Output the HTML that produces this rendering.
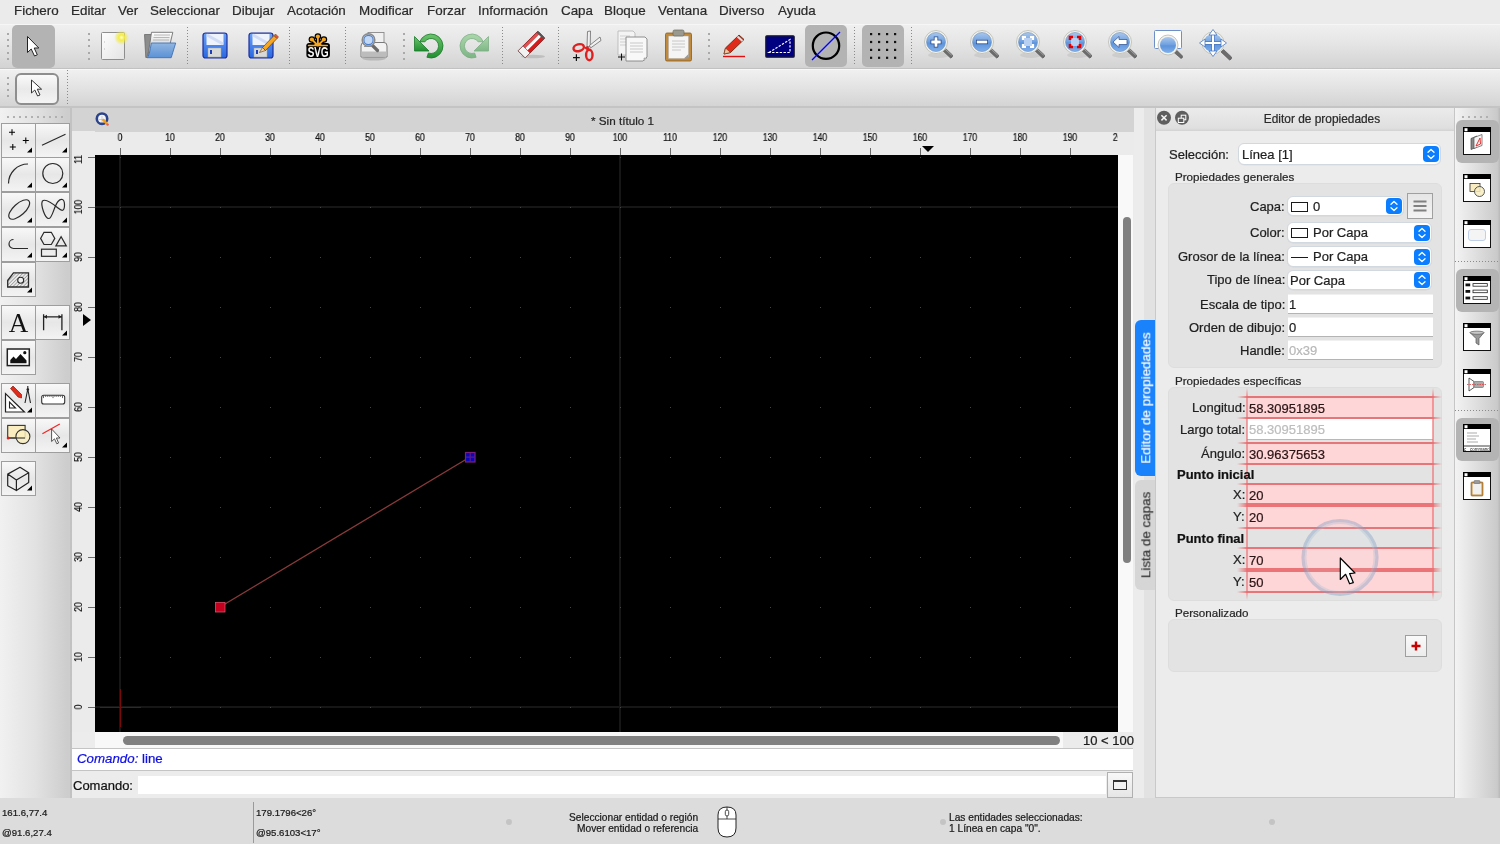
<!DOCTYPE html>
<html><head><meta charset="utf-8"><style>
*{box-sizing:border-box;margin:0;padding:0}
html,body{width:1500px;height:844px;overflow:hidden;background:#ececec;font-family:"Liberation Sans",sans-serif;color:#1e1e1e}
.a{position:absolute}
.t{position:absolute;white-space:nowrap;line-height:1;will-change:transform;-webkit-text-stroke:0.22px currentColor}
svg{position:absolute;overflow:visible;will-change:transform}
</style></head><body>

<div class="a" style="left:0;top:0;width:1500px;height:24px;background:#ebebeb"></div>
<div class="t" style="left:14px;top:4px;font-size:13.4px;color:#2b2b2b">Fichero</div>
<div class="t" style="left:71px;top:4px;font-size:13.4px;color:#2b2b2b">Editar</div>
<div class="t" style="left:118px;top:4px;font-size:13.4px;color:#2b2b2b">Ver</div>
<div class="t" style="left:150px;top:4px;font-size:13.4px;color:#2b2b2b">Seleccionar</div>
<div class="t" style="left:232px;top:4px;font-size:13.4px;color:#2b2b2b">Dibujar</div>
<div class="t" style="left:287px;top:4px;font-size:13.4px;color:#2b2b2b">Acotación</div>
<div class="t" style="left:359px;top:4px;font-size:13.4px;color:#2b2b2b">Modificar</div>
<div class="t" style="left:427px;top:4px;font-size:13.4px;color:#2b2b2b">Forzar</div>
<div class="t" style="left:478px;top:4px;font-size:13.4px;color:#2b2b2b">Información</div>
<div class="t" style="left:561px;top:4px;font-size:13.4px;color:#2b2b2b">Capa</div>
<div class="t" style="left:604px;top:4px;font-size:13.4px;color:#2b2b2b">Bloque</div>
<div class="t" style="left:658px;top:4px;font-size:13.4px;color:#2b2b2b">Ventana</div>
<div class="t" style="left:719px;top:4px;font-size:13.4px;color:#2b2b2b">Diverso</div>
<div class="t" style="left:778px;top:4px;font-size:13.4px;color:#2b2b2b">Ayuda</div>
<div class="a" style="left:0;top:24px;width:1500px;height:45px;background:linear-gradient(#efefef,#e6e6e6 40%,#d3d3d3);border-top:1px solid #f6f6f6;border-bottom:1.5px solid #c2c2c2"></div>
<div class="a" style="left:0;top:69px;width:1500px;height:39px;background:linear-gradient(#f0f0f0,#e4e4e4 45%,#d4d4d4);border-top:1px solid #f8f8f8;border-bottom:2px solid #c4c4c4"></div>
<div class="a" style="left:7px;top:33.0px;width:2px;height:2px;background:#a9a9a9"></div><div class="a" style="left:7px;top:39.2px;width:2px;height:2px;background:#a9a9a9"></div><div class="a" style="left:7px;top:45.4px;width:2px;height:2px;background:#a9a9a9"></div><div class="a" style="left:7px;top:51.6px;width:2px;height:2px;background:#a9a9a9"></div><div class="a" style="left:7px;top:57.8px;width:2px;height:2px;background:#a9a9a9"></div>
<div class="a" style="left:88px;top:33.0px;width:2px;height:2px;background:#a9a9a9"></div><div class="a" style="left:88px;top:39.2px;width:2px;height:2px;background:#a9a9a9"></div><div class="a" style="left:88px;top:45.4px;width:2px;height:2px;background:#a9a9a9"></div><div class="a" style="left:88px;top:51.6px;width:2px;height:2px;background:#a9a9a9"></div><div class="a" style="left:88px;top:57.8px;width:2px;height:2px;background:#a9a9a9"></div>
<div class="a" style="left:403px;top:33.0px;width:2px;height:2px;background:#a9a9a9"></div><div class="a" style="left:403px;top:39.2px;width:2px;height:2px;background:#a9a9a9"></div><div class="a" style="left:403px;top:45.4px;width:2px;height:2px;background:#a9a9a9"></div><div class="a" style="left:403px;top:51.6px;width:2px;height:2px;background:#a9a9a9"></div><div class="a" style="left:403px;top:57.8px;width:2px;height:2px;background:#a9a9a9"></div>
<div class="a" style="left:708px;top:33.0px;width:2px;height:2px;background:#a9a9a9"></div><div class="a" style="left:708px;top:39.2px;width:2px;height:2px;background:#a9a9a9"></div><div class="a" style="left:708px;top:45.4px;width:2px;height:2px;background:#a9a9a9"></div><div class="a" style="left:708px;top:51.6px;width:2px;height:2px;background:#a9a9a9"></div><div class="a" style="left:708px;top:57.8px;width:2px;height:2px;background:#a9a9a9"></div>
<div class="a" style="left:187px;top:27px;width:1px;height:39px;background:repeating-linear-gradient(#8a8a8a 0 1px,transparent 1px 3px)"></div>
<div class="a" style="left:289px;top:27px;width:1px;height:39px;background:repeating-linear-gradient(#8a8a8a 0 1px,transparent 1px 3px)"></div>
<div class="a" style="left:345px;top:27px;width:1px;height:39px;background:repeating-linear-gradient(#8a8a8a 0 1px,transparent 1px 3px)"></div>
<div class="a" style="left:502px;top:27px;width:1px;height:39px;background:repeating-linear-gradient(#8a8a8a 0 1px,transparent 1px 3px)"></div>
<div class="a" style="left:558px;top:27px;width:1px;height:39px;background:repeating-linear-gradient(#8a8a8a 0 1px,transparent 1px 3px)"></div>
<div class="a" style="left:854px;top:27px;width:1px;height:39px;background:repeating-linear-gradient(#8a8a8a 0 1px,transparent 1px 3px)"></div>
<div class="a" style="left:911px;top:27px;width:1px;height:39px;background:repeating-linear-gradient(#8a8a8a 0 1px,transparent 1px 3px)"></div>
<div class="a" style="left:12px;top:25px;width:43px;height:43px;border-radius:5px;background:#b3b3b3"></div>
<div class="a" style="left:805px;top:25px;width:42px;height:42px;border-radius:5px;background:#b3b3b3"></div>
<div class="a" style="left:862px;top:25px;width:42px;height:42px;border-radius:5px;background:#b3b3b3"></div>
<div class="a" style="left:7px;top:77.0px;width:2px;height:2px;background:#a9a9a9"></div><div class="a" style="left:7px;top:83.0px;width:2px;height:2px;background:#a9a9a9"></div><div class="a" style="left:7px;top:89.0px;width:2px;height:2px;background:#a9a9a9"></div><div class="a" style="left:7px;top:95.0px;width:2px;height:2px;background:#a9a9a9"></div>
<div class="a" style="left:67px;top:70px;width:1px;height:36px;background:repeating-linear-gradient(#8a8a8a 0 1px,transparent 1px 3px)"></div>
<div class="a" style="left:14.5px;top:72.5px;width:44px;height:32px;border-radius:6px;border:2px solid #8e8e8e;background:linear-gradient(#fafafa,#e9e9e9 50%,#f4f4f4)"></div>
<svg width="0" height="0" style="position:absolute"><defs>
<linearGradient id="gBlue" x1="0" y1="0" x2="0" y2="1"><stop offset="0" stop-color="#a9c8ee"/><stop offset="0.5" stop-color="#6d9fdf"/><stop offset="0.55" stop-color="#5d93da"/><stop offset="1" stop-color="#7fb0ee"/></linearGradient>
<linearGradient id="gPage" x1="0" y1="0" x2="1" y2="1"><stop offset="0" stop-color="#fdfdfd"/><stop offset="1" stop-color="#e4e4e4"/></linearGradient>
<radialGradient id="gGlow"><stop offset="0" stop-color="#fffde0"/><stop offset="0.35" stop-color="#f4ee40"/><stop offset="1" stop-color="#f0e840" stop-opacity="0"/></radialGradient>
<linearGradient id="gGreen" x1="0" y1="0" x2="0" y2="1"><stop offset="0" stop-color="#6cc46c"/><stop offset="1" stop-color="#1f8f2f"/></linearGradient>
<linearGradient id="gFloppy" x1="0" y1="0" x2="0" y2="1"><stop offset="0" stop-color="#6aa2f8"/><stop offset="1" stop-color="#2a66e0"/></linearGradient>
</defs></svg>
<svg style="left:26px;top:35.5px" width="18" height="24" viewBox="0 0 18 24"><path d="M1.5 0.5 L1.5 16.5 L5.2 13 L8.5 20 L11.3 18.8 L8.2 12 L12.8 12 Z" fill="#fff" stroke="#222" stroke-width="1" stroke-linejoin="round"/></svg>
<svg style="left:30px;top:79px" width="14" height="20" viewBox="0 0 14 20"><path d="M1.5 1 L1.5 14 L4.8 11 L7.6 17 L10 16 L7.3 10.2 L11.6 10.2 Z" fill="#fff" stroke="#333" stroke-width="1" stroke-linejoin="round"/></svg>
<svg style="left:100px;top:31px" width="30" height="30" viewBox="0 0 30 30"><rect x="1.5" y="1.5" width="23" height="27" rx="1" fill="url(#gPage)" stroke="#8e8e8e" stroke-width="1"/><circle cx="21.5" cy="6.5" r="7.5" fill="url(#gGlow)"/><path d="M4 11h1M4 18h1" stroke="#bbb"/></svg>
<svg style="left:143px;top:31px" width="34" height="30" viewBox="0 0 34 30"><defs><linearGradient id="gFold" x1="0" y1="0" x2="0" y2="1"><stop offset="0" stop-color="#92b6e0"/><stop offset="1" stop-color="#5b92d6"/></linearGradient><linearGradient id="gPap" x1="0" y1="0" x2="0" y2="1"><stop offset="0" stop-color="#fff"/><stop offset="1" stop-color="#b8b8b8"/></linearGradient></defs><path d="M1.5 3.5L9 3.5L8 12L3.8 26.5L2.8 26.5Z" fill="#8c8c8c" stroke="#6a6a6a" stroke-width="0.8"/><path d="M8.5 1.3L29.8 1.3L27.3 12L5 25Z" fill="url(#gPap)" stroke="#707070" stroke-width="0.9"/><path d="M11 4H27M10.5 6.5H26.5M10 9H26" stroke="#b0b0b0" stroke-width="0.9"/><path d="M8.3 12L32.7 12L28.2 26.7L4 26.7Q6.5 25 8.3 12Z" fill="url(#gFold)" stroke="#3f72b8" stroke-width="0.9"/></svg>
<svg style="left:202px;top:32px" width="28" height="28" viewBox="0 0 28 28"><rect x="1" y="1" width="24" height="25" rx="2.5" fill="url(#gFloppy)" stroke="#1c2f9a" stroke-width="1.2"/><rect x="4.5" y="2" width="17" height="11" fill="#eef2fb"/><path d="M5 3 L21 12" stroke="#d0dcf6" stroke-width="3"/><rect x="6" y="16" width="13" height="9" fill="#d8d8d8" stroke="#9aa" stroke-width="0.5"/><rect x="8" y="18" width="2" height="4" fill="#1b3fbf"/></svg>
<svg style="left:248px;top:32px" width="28" height="28" viewBox="0 0 28 28"><rect x="1" y="1" width="24" height="25" rx="2.5" fill="url(#gFloppy)" stroke="#1c2f9a" stroke-width="1.2"/><rect x="4.5" y="2" width="17" height="11" fill="#eef2fb"/><path d="M5 3 L21 12" stroke="#d0dcf6" stroke-width="3"/><rect x="6" y="16" width="13" height="9" fill="#d8d8d8" stroke="#9aa" stroke-width="0.5"/><rect x="8" y="18" width="2" height="4" fill="#1b3fbf"/><path d="M14.5 15.5L26 3.5L29 6.5L17.5 18.5Z" fill="#f5a623" stroke="#7a4a10" stroke-width="0.8"/><path d="M14.5 15.5L17.5 18.5L11.5 20.5Z" fill="#f4d0a0" stroke="#5a3a10" stroke-width="0.6"/><path d="M26 3.5L27.5 2L30.5 5L29 6.5Z" fill="#e85040" stroke="#7a4a10" stroke-width="0.6"/></svg>
<svg style="left:304px;top:32px" width="28" height="28" viewBox="0 0 28 28"><rect x="2.4" y="10.9" width="23.5" height="15" rx="2.8" fill="#000"/><g stroke="#000" stroke-linecap="round"><path d="M13.9 14L13.9 4.5M13.9 14L7.9 7.5M13.9 14L19.9 7.5" stroke-width="4.2"/><path d="M4 13.8H23.8" stroke-width="3"/></g><g fill="#000"><circle cx="13.9" cy="4.5" r="3.3"/><circle cx="7.9" cy="7.5" r="3.3"/><circle cx="19.9" cy="7.5" r="3.3"/></g><g fill="#f5a623"><circle cx="13.9" cy="4.5" r="2.1"/><circle cx="7.9" cy="7.5" r="2.1"/><circle cx="19.9" cy="7.5" r="2.1"/></g><g stroke="#f5a623" stroke-linecap="round"><path d="M13.9 13.5L13.9 4.5M13.9 13.5L7.9 7.5M13.9 13.5L19.9 7.5" stroke-width="1.8"/><path d="M4.5 13.6H23.3" stroke-width="1.5"/></g><path d="M9 13.6Q13.9 9 18.8 13.6Z" fill="#f5a623"/></svg>
<div class="t" style="left:318.2px;top:45px;font-size:14.3px;font-weight:bold;color:#fff;transform:translateX(-50%) scaleX(0.7);-webkit-text-stroke:0;letter-spacing:-0.2px">SVG</div>
<svg style="left:359px;top:31px" width="32" height="30" viewBox="0 0 32 30"><ellipse cx="15" cy="27.5" rx="12" ry="2" fill="rgba(0,0,0,0.15)"/><rect x="9" y="1.5" width="16" height="14" fill="#f0f0f0" stroke="#8a8a8a" stroke-width="0.9"/><path d="M2 15 Q2 11.5 5 11.5 L25 11.5 Q28 11.5 28 15 L28 26 L2 26 Z" fill="#f2f2f2" stroke="#7a7a7a" stroke-width="1"/><rect x="2.5" y="20.5" width="25" height="5" fill="#bcbcbc"/><path d="M5 15.5H12" stroke="#999" stroke-width="1"/><path d="M11 12 L18.5 19.5" stroke="#6a6a6a" stroke-width="3.2" stroke-linecap="round"/><circle cx="9.5" cy="9" r="6.3" fill="#c2d8f4" stroke="#8a8a8a" stroke-width="1.5"/><circle cx="9.5" cy="9" r="4.6" fill="none" stroke="#4f7fc8" stroke-width="1.1"/></svg>
<svg style="left:412px;top:32px" width="34" height="30" viewBox="0 0 34 30"><path d="M7.7 9.9A12 12 0 1 1 14.9 25.3L16.4 21A7.5 7.5 0 1 0 12.9 9.7Z" fill="url(#gGreen)" stroke="#1a7a2a" stroke-width="0.8"/><path d="M2.5 4.5L2.5 19L17 19Z" fill="url(#gGreen)" stroke="#1a7a2a" stroke-width="0.8" stroke-linejoin="round"/></svg>
<svg style="left:457px;top:32px" width="34" height="30" viewBox="0 0 34 30"><g transform="translate(34,0) scale(-1,1)" opacity="0.5"><path d="M7.7 9.9A12 12 0 1 1 14.9 25.3L16.4 21A7.5 7.5 0 1 0 12.9 9.7Z" fill="url(#gGreen)" stroke="#1a7a2a" stroke-width="0.8"/><path d="M2.5 4.5L2.5 19L17 19Z" fill="url(#gGreen)" stroke="#1a7a2a" stroke-width="0.8" stroke-linejoin="round"/></g></svg>
<svg style="left:516px;top:32px" width="30" height="30" viewBox="0 0 30 30"><ellipse cx="17" cy="24.5" rx="12" ry="1.8" fill="rgba(0,0,0,0.13)"/><g transform="rotate(-45 15.5 12.5)"><rect x="1.5" y="7.5" width="28" height="10" rx="1" fill="#d41a1a" stroke="#7a1010" stroke-width="0.7"/><rect x="2" y="7.8" width="27" height="3" fill="#e05050"/><rect x="8" y="10.8" width="21" height="3" fill="#fff"/><rect x="27.5" y="7.5" width="2" height="10" fill="#555"/><rect x="1.5" y="7.5" width="7" height="10" fill="#f2f2f2" stroke="#7a4a4a" stroke-width="0.7"/></g></svg>
<svg style="left:571px;top:30px" width="32" height="32" viewBox="0 0 32 32"><path d="M16 17L16.5 1.5L19.5 1L19.2 16.5Z" fill="#f0f0f0" stroke="#6a6a6a" stroke-width="0.8"/><path d="M18.5 15.5L29 7L30 10.5L19.5 18Z" fill="#f0f0f0" stroke="#6a6a6a" stroke-width="0.8"/><path d="M12.5 17.5L17 16L19 20L17 21Z" fill="#e02020"/><ellipse cx="7.7" cy="17.7" rx="5.3" ry="3.4" transform="rotate(-15 7.7 17.7)" fill="none" stroke="#e02020" stroke-width="2.4"/><ellipse cx="18.3" cy="25" rx="3.2" ry="5.3" fill="none" stroke="#e02020" stroke-width="2.4"/><path d="M2 27.7H8.8M5.4 24.3V31.1" stroke="#111" stroke-width="1.2"/></svg>
<svg style="left:616px;top:29px" width="34" height="34" viewBox="0 0 34 34"><path d="M2 2 L17 2 L19 4 L19 26 L2 26Z" fill="#f4f4f4" stroke="#b4b4b4" stroke-width="0.8"/><path d="M4 7H14M4 10H14M4 13H14M4 16H14" stroke="#cfcfcf"/><path d="M10 8 L29 8 L31 10 L31 28 L27 32 L10 32Z" fill="#f8f8f8" stroke="#858585" stroke-width="0.9"/><path d="M28 32 L28 29 L31 29" fill="#bbb" stroke="#999" stroke-width="0.6"/><path d="M14 14H27M14 17H27M14 20H27M14 23H27" stroke="#c8c8c8"/><path d="M2 28H9M5.5 24.5V31.5" stroke="#111" stroke-width="1.05"/></svg>
<svg style="left:664px;top:29px" width="30" height="34" viewBox="0 0 30 34"><rect x="1.5" y="4" width="26" height="28" rx="1.5" fill="#c18a3a" stroke="#8a5a20" stroke-width="0.8"/><path d="M4.5 7 L24.5 7 L24.5 28 L20 29.5 L4.5 29.5Z" fill="#f5f5f5" stroke="#aaa" stroke-width="0.5"/><path d="M8 12H21M8 15H21M8 18H21M8 21H17" stroke="#c8c8c8"/><path d="M20 29.5 L24.5 25 L24.5 29.5Z" fill="#999"/><rect x="9" y="1" width="11" height="6" rx="1.5" fill="#9a9a90" stroke="#6a6a60" stroke-width="0.7"/></svg>
<svg style="left:722px;top:33px" width="26" height="26" viewBox="0 0 26 26"><path d="M2 21 L3.5 15 L17 2 L22 6.5 L8.5 19.5Z" fill="#e02a1a" stroke="#6a2a10" stroke-width="0.9"/><path d="M15.5 3.5 L20.5 8" stroke="#ddd" stroke-width="2"/><path d="M2 21 L3.5 15 L8.5 19.5Z" fill="#f0c8a0" stroke="#6a2a10" stroke-width="0.6"/><path d="M1 23.5H23" stroke="#e01010" stroke-width="1.4"/></svg>
<svg style="left:765px;top:35px" width="30" height="23" viewBox="0 0 30 23"><rect x="0.8" y="0.8" width="28.4" height="21.4" rx="1" fill="#000080" stroke="#1a1a2a" stroke-width="1.2"/><path d="M4 17.5 L25 4.5 L25 17.5 Z" fill="none" stroke="#fff" stroke-width="1.2" stroke-dasharray="2.4 1.4"/></svg>
<svg style="left:809px;top:29px" width="34" height="34" viewBox="0 0 34 34"><circle cx="17" cy="16.7" r="13.2" fill="none" stroke="#000" stroke-width="2.2"/><path d="M3 31 L31 3" stroke="#0000ff" stroke-width="1.3"/></svg>
<svg style="left:862px;top:25px" width="42" height="42" viewBox="0 0 42 42"><rect x="8" y="8.0" width="2.2" height="2.2" fill="#111"/><rect x="8" y="15.9" width="2.2" height="2.2" fill="#111"/><rect x="8" y="23.8" width="2.2" height="2.2" fill="#111"/><rect x="8" y="31.7" width="2.2" height="2.2" fill="#111"/><rect x="16" y="8.0" width="2.2" height="2.2" fill="#111"/><rect x="16" y="15.9" width="2.2" height="2.2" fill="#111"/><rect x="16" y="23.8" width="2.2" height="2.2" fill="#111"/><rect x="16" y="31.7" width="2.2" height="2.2" fill="#111"/><rect x="24" y="8.0" width="2.2" height="2.2" fill="#111"/><rect x="24" y="15.9" width="2.2" height="2.2" fill="#111"/><rect x="24" y="23.8" width="2.2" height="2.2" fill="#111"/><rect x="24" y="31.7" width="2.2" height="2.2" fill="#111"/><rect x="32" y="8.0" width="2.2" height="2.2" fill="#111"/><rect x="32" y="15.9" width="2.2" height="2.2" fill="#111"/><rect x="32" y="23.8" width="2.2" height="2.2" fill="#111"/><rect x="32" y="31.7" width="2.2" height="2.2" fill="#111"/></svg>
<svg style="left:922px;top:27.5px" width="32" height="32" viewBox="0 0 32 32"><ellipse cx="17" cy="27" rx="11" ry="3" fill="rgba(0,0,0,0.07)"/><path d="M20 22L22.5 19.5L30.5 27Q31 29.5 28.5 30Z" fill="#6c6c6c" stroke="#505050" stroke-width="0.6"/><path d="M22.5 20.5L29.5 27" stroke="#a8a8a8" stroke-width="0.9" stroke-linecap="round"/><circle cx="14" cy="14" r="11.5" fill="#f2f2ee" stroke="#b9b9b0" stroke-width="0.8"/><circle cx="14" cy="14" r="9.5" fill="url(#gBlue)" stroke="#6d8fb8" stroke-width="0.6"/><path d="M14 8.5V19.5M8.5 14H19.5" stroke="#2a4a8a" stroke-width="4.4"/><path d="M14 9.3V18.7M9.3 14H18.7" stroke="#fff" stroke-width="2.8"/></svg>
<svg style="left:968px;top:27.5px" width="32" height="32" viewBox="0 0 32 32"><ellipse cx="17" cy="27" rx="11" ry="3" fill="rgba(0,0,0,0.07)"/><path d="M20 22L22.5 19.5L30.5 27Q31 29.5 28.5 30Z" fill="#6c6c6c" stroke="#505050" stroke-width="0.6"/><path d="M22.5 20.5L29.5 27" stroke="#a8a8a8" stroke-width="0.9" stroke-linecap="round"/><circle cx="14" cy="14" r="11.5" fill="#f2f2ee" stroke="#b9b9b0" stroke-width="0.8"/><circle cx="14" cy="14" r="9.5" fill="url(#gBlue)" stroke="#6d8fb8" stroke-width="0.6"/><path d="M8 14H20" stroke="#2a4a8a" stroke-width="4.4"/><path d="M8.8 14H19.2" stroke="#fff" stroke-width="2.8"/></svg>
<svg style="left:1014.3px;top:27.5px" width="32" height="32" viewBox="0 0 32 32"><ellipse cx="17" cy="27" rx="11" ry="3" fill="rgba(0,0,0,0.07)"/><path d="M20 22L22.5 19.5L30.5 27Q31 29.5 28.5 30Z" fill="#6c6c6c" stroke="#505050" stroke-width="0.6"/><path d="M22.5 20.5L29.5 27" stroke="#a8a8a8" stroke-width="0.9" stroke-linecap="round"/><circle cx="14" cy="14" r="11.5" fill="#f2f2ee" stroke="#b9b9b0" stroke-width="0.8"/><circle cx="14" cy="14" r="9.5" fill="url(#gBlue)" stroke="#6d8fb8" stroke-width="0.6"/><rect x="10" y="10" width="8" height="8" fill="#b8d0f2"/><path d="M9 12V9H12M16 9H19V12M19 16V19H16M12 19H9V16" fill="none" stroke="#fff" stroke-width="2.2"/></svg>
<svg style="left:1060.5px;top:27.5px" width="32" height="32" viewBox="0 0 32 32"><ellipse cx="17" cy="27" rx="11" ry="3" fill="rgba(0,0,0,0.07)"/><path d="M20 22L22.5 19.5L30.5 27Q31 29.5 28.5 30Z" fill="#6c6c6c" stroke="#505050" stroke-width="0.6"/><path d="M22.5 20.5L29.5 27" stroke="#a8a8a8" stroke-width="0.9" stroke-linecap="round"/><circle cx="14" cy="14" r="11.5" fill="#f2f2ee" stroke="#b9b9b0" stroke-width="0.8"/><circle cx="14" cy="14" r="9.5" fill="url(#gBlue)" stroke="#6d8fb8" stroke-width="0.6"/><rect x="10" y="10" width="8" height="8" fill="#b8d0f2"/><path d="M9 12V9H12M16 9H19V12M19 16V19H16M12 19H9V16" fill="none" stroke="#e00000" stroke-width="2.6"/></svg>
<svg style="left:1106.2px;top:27.5px" width="32" height="32" viewBox="0 0 32 32"><ellipse cx="17" cy="27" rx="11" ry="3" fill="rgba(0,0,0,0.07)"/><path d="M20 22L22.5 19.5L30.5 27Q31 29.5 28.5 30Z" fill="#6c6c6c" stroke="#505050" stroke-width="0.6"/><path d="M22.5 20.5L29.5 27" stroke="#a8a8a8" stroke-width="0.9" stroke-linecap="round"/><circle cx="14" cy="14" r="11.5" fill="#f2f2ee" stroke="#b9b9b0" stroke-width="0.8"/><circle cx="14" cy="14" r="9.5" fill="url(#gBlue)" stroke="#6d8fb8" stroke-width="0.6"/><path d="M7 14 L13 8.5 L13 11.5 L21 11.5 L21 16.5 L13 16.5 L13 19.5 Z" fill="#fff" stroke="#3a5a9a" stroke-width="0.8"/></svg>
<svg style="left:1153px;top:29px" width="32" height="32" viewBox="0 0 32 32"><rect x="1.5" y="1.5" width="27" height="18" rx="1" fill="#fff" stroke="#6d90c8" stroke-width="1"/><path d="M20.5 23L23 20.5L29.5 27Q30 29 28 29.5Z" fill="#6c6c6c" stroke="#505050" stroke-width="0.6"/><circle cx="15" cy="16" r="10" fill="#f2f2ee" stroke="#b9b9b0" stroke-width="0.8"/><circle cx="15" cy="16" r="8" fill="url(#gBlue)"/></svg>
<svg style="left:1199px;top:28px" width="34" height="34" viewBox="0 0 34 34"><path d="M22 24L24.5 21.5L32.5 29Q33 31.5 30.5 32Z" fill="#6c6c6c" stroke="#505050" stroke-width="0.6"/><circle cx="14" cy="15" r="11" fill="#f2f2ee" stroke="#b9b9b0" stroke-width="0.8"/><circle cx="14" cy="15" r="9.3" fill="url(#gBlue)"/><path d="M14 5V25M4 15H24" stroke="#4a78c0" stroke-width="3.4"/><path d="M14 5V25M4 15H24" stroke="#fff" stroke-width="2"/><path d="M14 1.5L10 7H18Z M14 28.5L10 23H18Z M0.5 15L6 11V19Z M27.5 15L22 11V19Z" fill="#fff" stroke="#4a78c0" stroke-width="0.8" stroke-linejoin="round"/></svg>
<div class="a" style="left:0;top:108px;width:72px;height:690px;background:linear-gradient(90deg,#f1f1f1,#e2e2e2 50%,#cdcdcd 96%);border-right:2px solid #c2c2c2"></div>
<div class="a" style="left:7px;top:116px;width:2px;height:2px;background:#b0b0b0"></div>
<div class="a" style="left:13px;top:116px;width:2px;height:2px;background:#b0b0b0"></div>
<div class="a" style="left:19px;top:116px;width:2px;height:2px;background:#b0b0b0"></div>
<div class="a" style="left:25px;top:116px;width:2px;height:2px;background:#b0b0b0"></div>
<div class="a" style="left:31px;top:116px;width:2px;height:2px;background:#b0b0b0"></div>
<div class="a" style="left:37px;top:116px;width:2px;height:2px;background:#b0b0b0"></div>
<div class="a" style="left:43px;top:116px;width:2px;height:2px;background:#b0b0b0"></div>
<div class="a" style="left:49px;top:116px;width:2px;height:2px;background:#b0b0b0"></div>
<div class="a" style="left:55px;top:116px;width:2px;height:2px;background:#b0b0b0"></div>
<div class="a" style="left:61px;top:116px;width:2px;height:2px;background:#b0b0b0"></div>
<div class="a" style="left:1px;top:123px;width:35px;height:35px;border:1.5px solid #9e9e9e;background:linear-gradient(#f8f8f8,#e7e7e7 50%,#f3f3f3)"></div>
<div class="a" style="left:35px;top:123px;width:35px;height:35px;border:1.5px solid #9e9e9e;background:linear-gradient(#f8f8f8,#e7e7e7 50%,#f3f3f3)"></div>
<div class="a" style="left:1px;top:157px;width:35px;height:35px;border:1.5px solid #9e9e9e;background:linear-gradient(#f8f8f8,#e7e7e7 50%,#f3f3f3)"></div>
<div class="a" style="left:35px;top:157px;width:35px;height:35px;border:1.5px solid #9e9e9e;background:linear-gradient(#f8f8f8,#e7e7e7 50%,#f3f3f3)"></div>
<div class="a" style="left:1px;top:192px;width:35px;height:35px;border:1.5px solid #9e9e9e;background:linear-gradient(#f8f8f8,#e7e7e7 50%,#f3f3f3)"></div>
<div class="a" style="left:35px;top:192px;width:35px;height:35px;border:1.5px solid #9e9e9e;background:linear-gradient(#f8f8f8,#e7e7e7 50%,#f3f3f3)"></div>
<div class="a" style="left:1px;top:227px;width:35px;height:35px;border:1.5px solid #9e9e9e;background:linear-gradient(#f8f8f8,#e7e7e7 50%,#f3f3f3)"></div>
<div class="a" style="left:35px;top:227px;width:35px;height:35px;border:1.5px solid #9e9e9e;background:linear-gradient(#f8f8f8,#e7e7e7 50%,#f3f3f3)"></div>
<div class="a" style="left:1px;top:262px;width:35px;height:35px;border:1.5px solid #9e9e9e;background:linear-gradient(#f8f8f8,#e7e7e7 50%,#f3f3f3)"></div>
<div class="a" style="left:1px;top:305px;width:35px;height:35px;border:1.5px solid #9e9e9e;background:linear-gradient(#f8f8f8,#e7e7e7 50%,#f3f3f3)"></div>
<div class="a" style="left:35px;top:305px;width:35px;height:35px;border:1.5px solid #9e9e9e;background:linear-gradient(#f8f8f8,#e7e7e7 50%,#f3f3f3)"></div>
<div class="a" style="left:1px;top:340px;width:35px;height:35px;border:1.5px solid #9e9e9e;background:linear-gradient(#f8f8f8,#e7e7e7 50%,#f3f3f3)"></div>
<div class="a" style="left:1px;top:383px;width:35px;height:35px;border:1.5px solid #9e9e9e;background:linear-gradient(#f8f8f8,#e7e7e7 50%,#f3f3f3)"></div>
<div class="a" style="left:35px;top:383px;width:35px;height:35px;border:1.5px solid #9e9e9e;background:linear-gradient(#f8f8f8,#e7e7e7 50%,#f3f3f3)"></div>
<div class="a" style="left:1px;top:418px;width:35px;height:35px;border:1.5px solid #9e9e9e;background:linear-gradient(#f8f8f8,#e7e7e7 50%,#f3f3f3)"></div>
<div class="a" style="left:35px;top:418px;width:35px;height:35px;border:1.5px solid #9e9e9e;background:linear-gradient(#f8f8f8,#e7e7e7 50%,#f3f3f3)"></div>
<div class="a" style="left:1px;top:461px;width:35px;height:35px;border:1.5px solid #9e9e9e;background:linear-gradient(#f8f8f8,#e7e7e7 50%,#f3f3f3)"></div>
<svg style="left:1.5px;top:122.5px" width="34" height="34" viewBox="0 0 34 34"><path d="M7 9.2H13M10 6.2V12.2M20.8 17.5H26.8M23.8 14.5V20.5M7.8 24H13.8M10.8 21V27" stroke="#000" stroke-width="1.05"/><path d="M25 29.5H30V24.5Z" fill="#000"/></svg>
<svg style="left:36.5px;top:122.5px" width="34" height="34" viewBox="0 0 34 34"><path d="M5 22.3L28.5 11.2" fill="none" stroke="#2a2a2a" stroke-width="1.2"/><path d="M25 29.5H30V24.5Z" fill="#000"/></svg>
<svg style="left:1.5px;top:157.5px" width="34" height="34" viewBox="0 0 34 34"><path d="M6.5 25.5A19.5 19.5 0 0 1 26 6" fill="none" stroke="#2a2a2a" stroke-width="1.2"/><path d="M25 29.5H30V24.5Z" fill="#000"/></svg>
<svg style="left:36.5px;top:157.5px" width="34" height="34" viewBox="0 0 34 34"><circle cx="15.8" cy="15.5" r="10" fill="none" stroke="#2a2a2a" stroke-width="1.2"/><path d="M25 29.5H30V24.5Z" fill="#000"/></svg>
<svg style="left:1.5px;top:192.5px" width="34" height="34" viewBox="0 0 34 34"><ellipse cx="17.2" cy="16.5" rx="13" ry="5.8" transform="rotate(-42 17.2 16.5)" fill="none" stroke="#2a2a2a" stroke-width="1.2"/><path d="M25 29.5H30V24.5Z" fill="#000"/></svg>
<svg style="left:36.5px;top:192.5px" width="34" height="34" viewBox="0 0 34 34"><path d="M5.3 8.2C3.5 12 8 26 12 25.5C15.5 25 17 13 21 8.5C24 5 27.5 5.5 27.5 12C27.5 19 24.5 18 21 15C15 10 8 5 5.3 8.2Z" fill="none" stroke="#2a2a2a" stroke-width="1.2"/><path d="M25 29.5H30V24.5Z" fill="#000"/></svg>
<svg style="left:1.5px;top:227.5px" width="34" height="34" viewBox="0 0 34 34"><path d="M11.5 11.5A4.5 4.5 0 0 0 11.5 20.5H26" fill="none" stroke="#2a2a2a" stroke-width="1.2"/><path d="M25 29.5H30V24.5Z" fill="#000"/></svg>
<svg style="left:36.5px;top:227.5px" width="34" height="34" viewBox="0 0 34 34"><path d="M7 4.3H14.3L17.8 10.4L14.3 16.5H7L3.6 10.4Z" fill="none" stroke="#2a2a2a" stroke-width="1.2"/><path d="M18.9 17.9L24.1 8.8L29.3 17.9Z" fill="none" stroke="#2a2a2a" stroke-width="1.2"/><rect x="4.5" y="21.2" width="14.8" height="7.1" fill="none" stroke="#2a2a2a" stroke-width="1.2"/><path d="M25 29.5H30V24.5Z" fill="#000"/></svg>
<svg style="left:1.5px;top:262.5px" width="34" height="34" viewBox="0 0 34 34"><defs><pattern id="hp" width="2.4" height="2.4" patternUnits="userSpaceOnUse" patternTransform="rotate(45)"><path d="M0 0V2.4" stroke="#555" stroke-width="0.8"/></pattern></defs><path d="M5.7 17.5L11.5 9.9H26.5V24H5.7Z" fill="url(#hp)" stroke="#2a2a2a" stroke-width="1.3"/><circle cx="18.7" cy="17.3" r="3" fill="#f0f0f0" stroke="#2a2a2a" stroke-width="1.1"/><path d="M25 29.5H30V24.5Z" fill="#000"/></svg>
<svg style="left:1.5px;top:305.5px" width="34" height="34" viewBox="0 0 34 34"><text x="16.5" y="26.3" text-anchor="middle" font-family="Liberation Serif" font-size="27" fill="#111">A</text></svg>
<svg style="left:36.5px;top:305.5px" width="34" height="34" viewBox="0 0 34 34"><path d="M6.6 8.3V24.3M24.9 8.3V24.3M6.6 10.8H24.9" stroke="#222" stroke-width="1.3"/><path d="M6.8 10.8L10 8.8V12.8Z M24.7 10.8L21.5 8.8V12.8Z" fill="#222"/><path d="M25 29.5H30V24.5Z" fill="#000"/></svg>
<svg style="left:1.5px;top:340.5px" width="34" height="34" viewBox="0 0 34 34"><rect x="5.3" y="8" width="22" height="16.6" fill="#fff" stroke="#222" stroke-width="1.5"/><path d="M8.3 22.3V19L11.5 15.5L14 18L18.5 13L24.5 19.5V22.3Z" fill="#111"/><circle cx="22.8" cy="11.7" r="1.6" fill="#111"/></svg>
<svg style="left:1.5px;top:383px" width="34" height="34" viewBox="0 0 34 34"><path d="M3.5 29V10.6L22.4 29Z" fill="#fff" stroke="#222" stroke-width="1.2"/><path d="M7.5 25V19L13.5 25Z" fill="none" stroke="#222" stroke-width="1.1"/><path d="M8.5 5.5L11 3L19.5 11.5L19.5 15L16 14Z" fill="#e02a1a" stroke="#7a2010" stroke-width="0.7"/><path d="M25.8 3V6M25.8 6L23 20M25.8 6L28.5 20" stroke="#222" stroke-width="1.1" fill="none"/><circle cx="25.8" cy="6.5" r="1.3" fill="#222"/><path d="M25 29.5H30V24.5Z" fill="#000"/></svg>
<svg style="left:36.5px;top:383px" width="34" height="34" viewBox="0 0 34 34"><rect x="4.7" y="12.3" width="23" height="8.7" rx="2" fill="#fff" stroke="#333" stroke-width="1.1"/><path d="M6.5 12.3v2.8M8.4 12.3v1.6M10.3 12.3v1.6M12.2 12.3v1.6M14.1 12.3v1.6M16.0 12.3v2.8M17.9 12.3v1.6M19.8 12.3v1.6M21.7 12.3v1.6M23.6 12.3v1.6M25.5 12.3v2.8" stroke="#444" stroke-width="0.8"/></svg>
<svg style="left:1.5px;top:418px" width="34" height="34" viewBox="0 0 34 34"><rect x="5.7" y="7.4" width="17.4" height="12.6" fill="#faeec0" stroke="#333" stroke-width="1.1"/><circle cx="20.9" cy="18.6" r="7" fill="#faeec0" fill-opacity="0.85" stroke="#333" stroke-width="1.1"/><path d="M5.7 20H23" stroke="#333" stroke-width="1"/><circle cx="6.2" cy="20" r="1.5" fill="#e02020"/></svg>
<svg style="left:36.5px;top:418px" width="34" height="34" viewBox="0 0 34 34"><path d="M5.4 15.7L22.8 6" stroke="#f02828" stroke-width="1.3"/><path d="M14.6 11 L14.6 23.5 L17.5 20.8 L19.8 25.8 L21.6 25 L19.4 20 L23 20 Z" fill="#fff" stroke="#444" stroke-width="0.9" stroke-linejoin="round"/><path d="M25 29.5H30V24.5Z" fill="#000"/></svg>
<svg style="left:1.5px;top:461px" width="34" height="34" viewBox="0 0 34 34"><path d="M5.7 13.1L18 6.3L26.7 11.7L14.4 19ZM5.7 13.1V24.7L14.4 29.6V19M26.7 11.7V21.5L14.4 29.6" fill="none" stroke="#222" stroke-width="1.2" stroke-linejoin="round"/><path d="M25 29.5H30V24.5Z" fill="#000"/></svg>
<div class="a" style="left:72px;top:108px;width:1062px;height:24px;background:#d3d3d3"></div>
<svg style="left:94px;top:110px" width="18" height="18"><circle cx="8" cy="8.7" r="5.2" fill="#f4f4f4" stroke="#2b428c" stroke-width="2.6"/><path d="M5 9.5H11M8 6V12" stroke="#b0b0c0" stroke-width="0.6"/><path d="M8.7 9.3L13.2 14.2" stroke="#f0a020" stroke-width="2.4"/><circle cx="13.6" cy="14.6" r="1.2" fill="#e06060"/></svg>
<div class="t" style="left:591px;top:114.5px;font-size:11.7px;color:#262626">* Sin título 1</div>
<div class="a" style="left:72px;top:132px;width:1062px;height:600px;background:#ebebeb"></div>
<div class="a" style="left:95px;top:155px;width:1023px;height:577px;background:#000"></div>
<div class="a" style="left:1118px;top:155px;width:15px;height:577px;background:#f9f9f9"></div>
<div class="a" style="left:1123px;top:217px;width:8px;height:346px;border-radius:4px;background:#808080"></div>
<div class="a" style="left:95px;top:732px;width:1023px;height:16px;background:#f8f8f8"></div>
<div class="a" style="left:123px;top:736px;width:937px;height:9px;border-radius:4.5px;background:#808080"></div>
<div class="a" style="left:1063px;top:732px;width:71px;height:16px;background:#ebebeb"></div>
<div class="t" style="left:1083px;top:734px;font-size:13px;color:#1a1a1a">10 &lt; 100</div>
<div class="a" style="left:72px;top:748px;width:1061px;height:23px;background:#fff;border-top:1.5px solid #c4c4c4;border-bottom:1px solid #c4c4c4"></div>
<div class="t" style="left:77px;top:752px;font-size:13.3px;color:#1010e0"><i>Comando:</i> line</div>
<div class="a" style="left:72px;top:771px;width:1061px;height:27px;background:#ececec"></div>
<div class="t" style="left:73px;top:779px;font-size:13px;color:#111">Comando:</div>
<div class="a" style="left:138px;top:776px;width:968px;height:18px;background:#fff"></div>
<div class="a" style="left:1107px;top:772px;width:26px;height:26px;border:1px solid #b0b0b0;background:linear-gradient(#f8f8f8,#e6e6e6)"></div>
<div class="a" style="left:1113px;top:780px;width:14px;height:10px;border:1px solid #333;border-top-width:2.5px;background:#f2f2f2"></div>
<div class="t" style="left:120px;top:132.5px;font-size:10px;color:#111;transform:translateX(-50%) scaleX(0.86)">0</div>
<div class="a" style="left:120px;top:148px;width:1px;height:7px;background:#6a6a6a"></div>
<div class="t" style="left:170px;top:132.5px;font-size:10px;color:#111;transform:translateX(-50%) scaleX(0.86)">10</div>
<div class="a" style="left:170px;top:148px;width:1px;height:7px;background:#6a6a6a"></div>
<div class="t" style="left:220px;top:132.5px;font-size:10px;color:#111;transform:translateX(-50%) scaleX(0.86)">20</div>
<div class="a" style="left:220px;top:148px;width:1px;height:7px;background:#6a6a6a"></div>
<div class="t" style="left:270px;top:132.5px;font-size:10px;color:#111;transform:translateX(-50%) scaleX(0.86)">30</div>
<div class="a" style="left:270px;top:148px;width:1px;height:7px;background:#6a6a6a"></div>
<div class="t" style="left:320px;top:132.5px;font-size:10px;color:#111;transform:translateX(-50%) scaleX(0.86)">40</div>
<div class="a" style="left:320px;top:148px;width:1px;height:7px;background:#6a6a6a"></div>
<div class="t" style="left:370px;top:132.5px;font-size:10px;color:#111;transform:translateX(-50%) scaleX(0.86)">50</div>
<div class="a" style="left:370px;top:148px;width:1px;height:7px;background:#6a6a6a"></div>
<div class="t" style="left:420px;top:132.5px;font-size:10px;color:#111;transform:translateX(-50%) scaleX(0.86)">60</div>
<div class="a" style="left:420px;top:148px;width:1px;height:7px;background:#6a6a6a"></div>
<div class="t" style="left:470px;top:132.5px;font-size:10px;color:#111;transform:translateX(-50%) scaleX(0.86)">70</div>
<div class="a" style="left:470px;top:148px;width:1px;height:7px;background:#6a6a6a"></div>
<div class="t" style="left:520px;top:132.5px;font-size:10px;color:#111;transform:translateX(-50%) scaleX(0.86)">80</div>
<div class="a" style="left:520px;top:148px;width:1px;height:7px;background:#6a6a6a"></div>
<div class="t" style="left:570px;top:132.5px;font-size:10px;color:#111;transform:translateX(-50%) scaleX(0.86)">90</div>
<div class="a" style="left:570px;top:148px;width:1px;height:7px;background:#6a6a6a"></div>
<div class="t" style="left:620px;top:132.5px;font-size:10px;color:#111;transform:translateX(-50%) scaleX(0.86)">100</div>
<div class="a" style="left:620px;top:148px;width:1px;height:7px;background:#6a6a6a"></div>
<div class="t" style="left:670px;top:132.5px;font-size:10px;color:#111;transform:translateX(-50%) scaleX(0.86)">110</div>
<div class="a" style="left:670px;top:148px;width:1px;height:7px;background:#6a6a6a"></div>
<div class="t" style="left:720px;top:132.5px;font-size:10px;color:#111;transform:translateX(-50%) scaleX(0.86)">120</div>
<div class="a" style="left:720px;top:148px;width:1px;height:7px;background:#6a6a6a"></div>
<div class="t" style="left:770px;top:132.5px;font-size:10px;color:#111;transform:translateX(-50%) scaleX(0.86)">130</div>
<div class="a" style="left:770px;top:148px;width:1px;height:7px;background:#6a6a6a"></div>
<div class="t" style="left:820px;top:132.5px;font-size:10px;color:#111;transform:translateX(-50%) scaleX(0.86)">140</div>
<div class="a" style="left:820px;top:148px;width:1px;height:7px;background:#6a6a6a"></div>
<div class="t" style="left:870px;top:132.5px;font-size:10px;color:#111;transform:translateX(-50%) scaleX(0.86)">150</div>
<div class="a" style="left:870px;top:148px;width:1px;height:7px;background:#6a6a6a"></div>
<div class="t" style="left:920px;top:132.5px;font-size:10px;color:#111;transform:translateX(-50%) scaleX(0.86)">160</div>
<div class="a" style="left:920px;top:148px;width:1px;height:7px;background:#6a6a6a"></div>
<div class="t" style="left:970px;top:132.5px;font-size:10px;color:#111;transform:translateX(-50%) scaleX(0.86)">170</div>
<div class="a" style="left:970px;top:148px;width:1px;height:7px;background:#6a6a6a"></div>
<div class="t" style="left:1020px;top:132.5px;font-size:10px;color:#111;transform:translateX(-50%) scaleX(0.86)">180</div>
<div class="a" style="left:1020px;top:148px;width:1px;height:7px;background:#6a6a6a"></div>
<div class="t" style="left:1070px;top:132.5px;font-size:10px;color:#111;transform:translateX(-50%) scaleX(0.86)">190</div>
<div class="a" style="left:1070px;top:148px;width:1px;height:7px;background:#6a6a6a"></div>
<div class="a" style="left:88px;top:707px;width:7px;height:1px;background:#6a6a6a"></div>
<div class="t" style="left:79px;top:707px;font-size:10px;color:#111;transform:translate(-50%,-50%) rotate(-90deg) scaleX(0.86)">0</div>
<div class="a" style="left:88px;top:657px;width:7px;height:1px;background:#6a6a6a"></div>
<div class="t" style="left:79px;top:657px;font-size:10px;color:#111;transform:translate(-50%,-50%) rotate(-90deg) scaleX(0.86)">10</div>
<div class="a" style="left:88px;top:607px;width:7px;height:1px;background:#6a6a6a"></div>
<div class="t" style="left:79px;top:607px;font-size:10px;color:#111;transform:translate(-50%,-50%) rotate(-90deg) scaleX(0.86)">20</div>
<div class="a" style="left:88px;top:557px;width:7px;height:1px;background:#6a6a6a"></div>
<div class="t" style="left:79px;top:557px;font-size:10px;color:#111;transform:translate(-50%,-50%) rotate(-90deg) scaleX(0.86)">30</div>
<div class="a" style="left:88px;top:507px;width:7px;height:1px;background:#6a6a6a"></div>
<div class="t" style="left:79px;top:507px;font-size:10px;color:#111;transform:translate(-50%,-50%) rotate(-90deg) scaleX(0.86)">40</div>
<div class="a" style="left:88px;top:457px;width:7px;height:1px;background:#6a6a6a"></div>
<div class="t" style="left:79px;top:457px;font-size:10px;color:#111;transform:translate(-50%,-50%) rotate(-90deg) scaleX(0.86)">50</div>
<div class="a" style="left:88px;top:407px;width:7px;height:1px;background:#6a6a6a"></div>
<div class="t" style="left:79px;top:407px;font-size:10px;color:#111;transform:translate(-50%,-50%) rotate(-90deg) scaleX(0.86)">60</div>
<div class="a" style="left:88px;top:357px;width:7px;height:1px;background:#6a6a6a"></div>
<div class="t" style="left:79px;top:357px;font-size:10px;color:#111;transform:translate(-50%,-50%) rotate(-90deg) scaleX(0.86)">70</div>
<div class="a" style="left:88px;top:307px;width:7px;height:1px;background:#6a6a6a"></div>
<div class="t" style="left:79px;top:307px;font-size:10px;color:#111;transform:translate(-50%,-50%) rotate(-90deg) scaleX(0.86)">80</div>
<div class="a" style="left:88px;top:257px;width:7px;height:1px;background:#6a6a6a"></div>
<div class="t" style="left:79px;top:257px;font-size:10px;color:#111;transform:translate(-50%,-50%) rotate(-90deg) scaleX(0.86)">90</div>
<div class="a" style="left:88px;top:207px;width:7px;height:1px;background:#6a6a6a"></div>
<div class="t" style="left:79px;top:207px;font-size:10px;color:#111;transform:translate(-50%,-50%) rotate(-90deg) scaleX(0.86)">100</div>
<div class="a" style="left:88px;top:157px;width:7px;height:1px;background:#6a6a6a"></div>
<div class="t" style="left:79px;top:157px;font-size:10px;color:#111;transform:translate(-50%,-50%) rotate(-90deg) scaleX(0.86)">110</div>
<div class="a" style="left:72px;top:131px;width:23px;height:24px;background:#ebebeb"></div>
<div class="a" style="left:1100px;top:131px;width:18px;height:24px;overflow:hidden"><div class="t" style="left:20px;top:1.5px;font-size:10px;color:#111;transform:translateX(-50%) scaleX(0.86)">200</div></div>
<svg style="left:0;top:0" width="1500" height="844"><path d="M922 146 L934 146 L928 152 Z" fill="#000"/></svg>
<svg style="left:0;top:0" width="1500" height="844"><path d="M83 314 L83 326 L91 320 Z" fill="#000"/></svg>
<svg style="left:95px;top:155px" width="1023" height="577" viewBox="95 155 1023 577"><rect x="95" y="155" width="1023" height="577" fill="#000"/><path d="M120 155V732M620 155V732M95 207H1118M95 707H1118" stroke="#161616" stroke-width="2"/><path d="M120 707h1v1h-1zM120 657h1v1h-1zM120 607h1v1h-1zM120 557h1v1h-1zM120 507h1v1h-1zM120 457h1v1h-1zM120 407h1v1h-1zM120 357h1v1h-1zM120 307h1v1h-1zM120 257h1v1h-1zM120 207h1v1h-1zM120 157h1v1h-1zM170 707h1v1h-1zM170 657h1v1h-1zM170 607h1v1h-1zM170 557h1v1h-1zM170 507h1v1h-1zM170 457h1v1h-1zM170 407h1v1h-1zM170 357h1v1h-1zM170 307h1v1h-1zM170 257h1v1h-1zM170 207h1v1h-1zM170 157h1v1h-1zM220 707h1v1h-1zM220 657h1v1h-1zM220 607h1v1h-1zM220 557h1v1h-1zM220 507h1v1h-1zM220 457h1v1h-1zM220 407h1v1h-1zM220 357h1v1h-1zM220 307h1v1h-1zM220 257h1v1h-1zM220 207h1v1h-1zM220 157h1v1h-1zM270 707h1v1h-1zM270 657h1v1h-1zM270 607h1v1h-1zM270 557h1v1h-1zM270 507h1v1h-1zM270 457h1v1h-1zM270 407h1v1h-1zM270 357h1v1h-1zM270 307h1v1h-1zM270 257h1v1h-1zM270 207h1v1h-1zM270 157h1v1h-1zM320 707h1v1h-1zM320 657h1v1h-1zM320 607h1v1h-1zM320 557h1v1h-1zM320 507h1v1h-1zM320 457h1v1h-1zM320 407h1v1h-1zM320 357h1v1h-1zM320 307h1v1h-1zM320 257h1v1h-1zM320 207h1v1h-1zM320 157h1v1h-1zM370 707h1v1h-1zM370 657h1v1h-1zM370 607h1v1h-1zM370 557h1v1h-1zM370 507h1v1h-1zM370 457h1v1h-1zM370 407h1v1h-1zM370 357h1v1h-1zM370 307h1v1h-1zM370 257h1v1h-1zM370 207h1v1h-1zM370 157h1v1h-1zM420 707h1v1h-1zM420 657h1v1h-1zM420 607h1v1h-1zM420 557h1v1h-1zM420 507h1v1h-1zM420 457h1v1h-1zM420 407h1v1h-1zM420 357h1v1h-1zM420 307h1v1h-1zM420 257h1v1h-1zM420 207h1v1h-1zM420 157h1v1h-1zM470 707h1v1h-1zM470 657h1v1h-1zM470 607h1v1h-1zM470 557h1v1h-1zM470 507h1v1h-1zM470 457h1v1h-1zM470 407h1v1h-1zM470 357h1v1h-1zM470 307h1v1h-1zM470 257h1v1h-1zM470 207h1v1h-1zM470 157h1v1h-1zM520 707h1v1h-1zM520 657h1v1h-1zM520 607h1v1h-1zM520 557h1v1h-1zM520 507h1v1h-1zM520 457h1v1h-1zM520 407h1v1h-1zM520 357h1v1h-1zM520 307h1v1h-1zM520 257h1v1h-1zM520 207h1v1h-1zM520 157h1v1h-1zM570 707h1v1h-1zM570 657h1v1h-1zM570 607h1v1h-1zM570 557h1v1h-1zM570 507h1v1h-1zM570 457h1v1h-1zM570 407h1v1h-1zM570 357h1v1h-1zM570 307h1v1h-1zM570 257h1v1h-1zM570 207h1v1h-1zM570 157h1v1h-1zM620 707h1v1h-1zM620 657h1v1h-1zM620 607h1v1h-1zM620 557h1v1h-1zM620 507h1v1h-1zM620 457h1v1h-1zM620 407h1v1h-1zM620 357h1v1h-1zM620 307h1v1h-1zM620 257h1v1h-1zM620 207h1v1h-1zM620 157h1v1h-1zM670 707h1v1h-1zM670 657h1v1h-1zM670 607h1v1h-1zM670 557h1v1h-1zM670 507h1v1h-1zM670 457h1v1h-1zM670 407h1v1h-1zM670 357h1v1h-1zM670 307h1v1h-1zM670 257h1v1h-1zM670 207h1v1h-1zM670 157h1v1h-1zM720 707h1v1h-1zM720 657h1v1h-1zM720 607h1v1h-1zM720 557h1v1h-1zM720 507h1v1h-1zM720 457h1v1h-1zM720 407h1v1h-1zM720 357h1v1h-1zM720 307h1v1h-1zM720 257h1v1h-1zM720 207h1v1h-1zM720 157h1v1h-1zM770 707h1v1h-1zM770 657h1v1h-1zM770 607h1v1h-1zM770 557h1v1h-1zM770 507h1v1h-1zM770 457h1v1h-1zM770 407h1v1h-1zM770 357h1v1h-1zM770 307h1v1h-1zM770 257h1v1h-1zM770 207h1v1h-1zM770 157h1v1h-1zM820 707h1v1h-1zM820 657h1v1h-1zM820 607h1v1h-1zM820 557h1v1h-1zM820 507h1v1h-1zM820 457h1v1h-1zM820 407h1v1h-1zM820 357h1v1h-1zM820 307h1v1h-1zM820 257h1v1h-1zM820 207h1v1h-1zM820 157h1v1h-1zM870 707h1v1h-1zM870 657h1v1h-1zM870 607h1v1h-1zM870 557h1v1h-1zM870 507h1v1h-1zM870 457h1v1h-1zM870 407h1v1h-1zM870 357h1v1h-1zM870 307h1v1h-1zM870 257h1v1h-1zM870 207h1v1h-1zM870 157h1v1h-1zM920 707h1v1h-1zM920 657h1v1h-1zM920 607h1v1h-1zM920 557h1v1h-1zM920 507h1v1h-1zM920 457h1v1h-1zM920 407h1v1h-1zM920 357h1v1h-1zM920 307h1v1h-1zM920 257h1v1h-1zM920 207h1v1h-1zM920 157h1v1h-1zM970 707h1v1h-1zM970 657h1v1h-1zM970 607h1v1h-1zM970 557h1v1h-1zM970 507h1v1h-1zM970 457h1v1h-1zM970 407h1v1h-1zM970 357h1v1h-1zM970 307h1v1h-1zM970 257h1v1h-1zM970 207h1v1h-1zM970 157h1v1h-1zM1020 707h1v1h-1zM1020 657h1v1h-1zM1020 607h1v1h-1zM1020 557h1v1h-1zM1020 507h1v1h-1zM1020 457h1v1h-1zM1020 407h1v1h-1zM1020 357h1v1h-1zM1020 307h1v1h-1zM1020 257h1v1h-1zM1020 207h1v1h-1zM1020 157h1v1h-1zM1070 707h1v1h-1zM1070 657h1v1h-1zM1070 607h1v1h-1zM1070 557h1v1h-1zM1070 507h1v1h-1zM1070 457h1v1h-1zM1070 407h1v1h-1zM1070 357h1v1h-1zM1070 307h1v1h-1zM1070 257h1v1h-1zM1070 207h1v1h-1zM1070 157h1v1h-1z" fill="#454545"/><path d="M120.5 689V727M100 707.5H141" stroke="#7a0a0a" stroke-width="1.2"/><line x1="220" y1="607" x2="470" y2="457" stroke="#8c3a3a" stroke-width="1.3"/><rect x="215.5" y="602.5" width="9.5" height="9.5" fill="#c4001e" stroke="#d8506a" stroke-width="0.8"/><rect x="465.5" y="452.5" width="9.5" height="9.5" fill="#0808b8" stroke="#7a2080" stroke-width="1.2"/><path d="M470.2 453V462M466 457.2H475" stroke="#5a1a8a" stroke-width="1.2"/></svg>
<div class="a" style="left:1134px;top:108px;width:10px;height:690px;background:#ececec"></div>
<div class="a" style="left:1144px;top:108px;width:11px;height:690px;background:#e2e2e2"></div>
<div class="a" style="left:1135px;top:320px;width:20px;height:156px;border-radius:6px 0 0 6px;background:#1a82fb"></div>
<div class="a" style="left:1135px;top:480px;width:20px;height:110px;border-radius:6px 0 0 6px;background:#d6d6d6"></div>
<div class="t" style="left:1145.5px;top:398px;font-size:13.45px;color:#fff;transform:translate(-50%,-50%) rotate(-90deg)">Editor de propiedades</div>
<div class="t" style="left:1145.5px;top:535px;font-size:13.4px;color:#333;transform:translate(-50%,-50%) rotate(-90deg)">Lista de capas</div>
<div class="a" style="left:1155px;top:108px;width:299px;height:690px;background:#ececec;border-left:1px solid #c9c9c9;border-bottom:1px solid #c9c9c9"></div>
<div class="a" style="left:1156px;top:108px;width:298px;height:23px;background:linear-gradient(#ebebeb,#dedede);border-bottom:1px solid #c9c9c9"></div>
<div class="t" style="left:1322px;top:114px;font-size:11.9px;color:#2a2a2a;transform:translateX(-50%)">Editor de propiedades</div>
<svg style="left:1155px;top:110px" width="40" height="18"><circle cx="9" cy="7.8" r="7" fill="#5e5e5e"/><path d="M6.4 5.2L11.6 10.4M11.6 5.2L6.4 10.4" stroke="#f4f4f4" stroke-width="1.5"/><circle cx="27" cy="7.8" r="7" fill="#5e5e5e"/><rect x="26.2" y="5.2" width="4.6" height="4.6" fill="none" stroke="#fff" stroke-width="1"/><rect x="23.3" y="8.2" width="5.5" height="4.3" fill="#5e5e5e" stroke="#fff" stroke-width="1"/></svg>
<div class="a" style="left:1156px;top:128px;width:298px;height:3px;background:linear-gradient(#e0e0e0,#d2d2d2)"></div>
<div class="t" style="left:1168.5px;top:147.5px;font-size:13px;color:#1e1e1e">Selección:</div>
<div class="a" style="left:1238px;top:143px;width:203px;height:22px;border-radius:6px;background:#fff;border:1px solid #d2d8df;box-shadow:0 0.5px 0.5px rgba(0,0,0,0.06)"></div><div class="t" style="left:1242px;top:147.5px;font-size:13px;color:#1e1e1e">Línea [1]</div><div class="a" style="left:1423px;top:146.0px;width:16px;height:16px;border-radius:4px;background:#0b7dff"></div><svg style="left:1423px;top:146.0px" width="16" height="16"><path d="M5.0 6.2L8.0 3.4000000000000004L11.0 6.2M5.0 9.8L8.0 12.6L11.0 9.8" stroke="#fff" stroke-width="1.3" fill="none" stroke-linecap="round" stroke-linejoin="round"/></svg>
<div class="t" style="left:1175px;top:171.2px;font-size:11.6px;color:#262626">Propiedades generales</div>
<div class="a" style="left:1168px;top:183px;width:274px;height:185px;border-radius:6px;background:#e3e3e3;border:1px solid #dddddd"></div>
<div class="t" style="right:215px;top:199.5px;font-size:13px;color:#1e1e1e">Capa:</div>
<div class="t" style="right:215px;top:225.5px;font-size:13px;color:#1e1e1e">Color:</div>
<div class="t" style="right:215px;top:249.5px;font-size:13px;color:#1e1e1e">Grosor de la línea:</div>
<div class="t" style="right:215px;top:272.5px;font-size:13px;color:#1e1e1e">Tipo de línea:</div>
<div class="t" style="right:215px;top:297.5px;font-size:13px;color:#1e1e1e">Escala de tipo:</div>
<div class="t" style="right:215px;top:320.5px;font-size:13px;color:#1e1e1e">Orden de dibujo:</div>
<div class="t" style="right:215px;top:343.5px;font-size:13px;color:#1e1e1e">Handle:</div>
<div class="a" style="left:1287px;top:196px;width:117px;height:20px;border-radius:6px;background:#fff;border:1px solid #d2d8df;box-shadow:0 0.5px 0.5px rgba(0,0,0,0.06)"></div><div class="a" style="left:1291px;top:201.5px;width:17px;height:10px;border:1px solid #1a1a1a"></div><div class="t" style="left:1313px;top:199.5px;font-size:13px;color:#1e1e1e">0</div><div class="a" style="left:1386px;top:198.0px;width:16px;height:16px;border-radius:4px;background:#0b7dff"></div><svg style="left:1386px;top:198.0px" width="16" height="16"><path d="M5.0 6.2L8.0 3.4000000000000004L11.0 6.2M5.0 9.8L8.0 12.6L11.0 9.8" stroke="#fff" stroke-width="1.3" fill="none" stroke-linecap="round" stroke-linejoin="round"/></svg>
<div class="a" style="left:1407px;top:193px;width:26px;height:26px;background:linear-gradient(#e6e6e6,#f4f4f4);border:1px solid #a0a0a0"></div>
<svg style="left:1407px;top:193px" width="26" height="26"><path d="M6.5 8.5H19.5M6.5 13H19.5M6.5 17.5H19.5" stroke="#808080" stroke-width="1.8"/></svg>
<div class="a" style="left:1287px;top:222px;width:145px;height:21px;border-radius:6px;background:#fff;border:1px solid #d2d8df;box-shadow:0 0.5px 0.5px rgba(0,0,0,0.06)"></div><div class="a" style="left:1291px;top:228.0px;width:17px;height:10px;border:1px solid #1a1a1a"></div><div class="t" style="left:1313px;top:226.0px;font-size:13px;color:#1e1e1e">Por Capa</div><div class="a" style="left:1414px;top:224.5px;width:16px;height:16px;border-radius:4px;background:#0b7dff"></div><svg style="left:1414px;top:224.5px" width="16" height="16"><path d="M5.0 6.2L8.0 3.4000000000000004L11.0 6.2M5.0 9.8L8.0 12.6L11.0 9.8" stroke="#fff" stroke-width="1.3" fill="none" stroke-linecap="round" stroke-linejoin="round"/></svg>
<div class="a" style="left:1287px;top:246px;width:145px;height:21px;border-radius:6px;background:#fff;border:1px solid #d2d8df;box-shadow:0 0.5px 0.5px rgba(0,0,0,0.06)"></div><div class="a" style="left:1291px;top:256.5px;width:17px;height:1px;background:#1a1a1a"></div><div class="t" style="left:1313px;top:250.0px;font-size:13px;color:#1e1e1e">Por Capa</div><div class="a" style="left:1414px;top:248.5px;width:16px;height:16px;border-radius:4px;background:#0b7dff"></div><svg style="left:1414px;top:248.5px" width="16" height="16"><path d="M5.0 6.2L8.0 3.4000000000000004L11.0 6.2M5.0 9.8L8.0 12.6L11.0 9.8" stroke="#fff" stroke-width="1.3" fill="none" stroke-linecap="round" stroke-linejoin="round"/></svg>
<div class="a" style="left:1287px;top:270px;width:145px;height:20px;border-radius:6px;background:#fff;border:1px solid #d2d8df;box-shadow:0 0.5px 0.5px rgba(0,0,0,0.06)"></div><div class="t" style="left:1290px;top:273.5px;font-size:13px;color:#1e1e1e">Por Capa</div><div class="a" style="left:1414px;top:272.0px;width:16px;height:16px;border-radius:4px;background:#0b7dff"></div><svg style="left:1414px;top:272.0px" width="16" height="16"><path d="M5.0 6.2L8.0 3.4000000000000004L11.0 6.2M5.0 9.8L8.0 12.6L11.0 9.8" stroke="#fff" stroke-width="1.3" fill="none" stroke-linecap="round" stroke-linejoin="round"/></svg>
<div class="a" style="left:1287.5px;top:294px;width:145px;height:20px;background:#fff;border-bottom:1px solid #b4b4b4;border-top:1px solid #f0f0f0"></div>
<div class="t" style="left:1289px;top:297.5px;font-size:13px;color:#1e1e1e">1</div>
<div class="a" style="left:1287.5px;top:317px;width:145px;height:20px;background:#fff;border-bottom:1px solid #b4b4b4;border-top:1px solid #f0f0f0"></div>
<div class="t" style="left:1289px;top:320.5px;font-size:13px;color:#1e1e1e">0</div>
<div class="a" style="left:1287.5px;top:340px;width:145px;height:20px;background:#fff;border-bottom:1px solid #b4b4b4;border-top:1px solid #f0f0f0"></div>
<div class="t" style="left:1289px;top:343.5px;font-size:13px;color:#b8b8b8">0x39</div>
<div class="t" style="left:1175px;top:375.2px;font-size:11.6px;color:#262626">Propiedades específicas</div>
<div class="a" style="left:1168px;top:387px;width:274px;height:214px;border-radius:6px;background:#e3e3e3;border:1px solid #dddddd"></div>
<div class="t" style="right:255px;top:401.0px;font-size:13px;color:#1e1e1e">Longitud:</div>
<div class="a" style="left:1247px;top:397px;width:186px;height:21px;background:#ffd6d8"></div>
<div class="t" style="left:1248.5px;top:402.0px;font-size:13px;color:#2a1414">58.30951895</div>
<div class="t" style="right:255px;top:423.0px;font-size:13px;color:#1e1e1e">Largo total:</div>
<div class="a" style="left:1247px;top:419px;width:186px;height:21px;background:#fff;border-bottom:1px solid #b8b8b8"></div>
<div class="t" style="left:1248.5px;top:423.0px;font-size:13px;color:#bdbdbd">58.30951895</div>
<div class="t" style="right:255px;top:447.0px;font-size:13px;color:#1e1e1e">Ángulo:</div>
<div class="a" style="left:1247px;top:443px;width:186px;height:21px;background:#ffd6d8"></div>
<div class="t" style="left:1248.5px;top:448.0px;font-size:13px;color:#2a1414">30.96375653</div>
<div class="t" style="right:255px;top:488.0px;font-size:13px;color:#1e1e1e">X:</div>
<div class="a" style="left:1247px;top:484px;width:186px;height:21px;background:#ffd6d8"></div>
<div class="t" style="left:1248.5px;top:489.0px;font-size:13px;color:#2a1414">20</div>
<div class="t" style="right:255px;top:510.0px;font-size:13px;color:#1e1e1e">Y:</div>
<div class="a" style="left:1247px;top:505px;width:186px;height:23px;background:#ffd6d8"></div>
<div class="t" style="left:1248.5px;top:511.0px;font-size:13px;color:#2a1414">20</div>
<div class="t" style="right:255px;top:552.5px;font-size:13px;color:#1e1e1e">X:</div>
<div class="a" style="left:1247px;top:548px;width:186px;height:22px;background:#ffd6d8"></div>
<div class="t" style="left:1248.5px;top:553.5px;font-size:13px;color:#2a1414">70</div>
<div class="t" style="right:255px;top:574.5px;font-size:13px;color:#1e1e1e">Y:</div>
<div class="a" style="left:1247px;top:570px;width:186px;height:22px;background:#ffd6d8"></div>
<div class="t" style="left:1248.5px;top:575.5px;font-size:13px;color:#2a1414">50</div>
<div class="a" style="left:1237px;top:396px;width:205px;height:1.7px;background:linear-gradient(90deg,rgba(228,88,92,0),rgba(228,88,92,.78) 5%,rgba(228,88,92,.78) 95%,rgba(228,88,92,0))"></div><div class="a" style="left:1237px;top:417px;width:205px;height:1.7px;background:linear-gradient(90deg,rgba(228,88,92,0),rgba(228,88,92,.78) 5%,rgba(228,88,92,.78) 95%,rgba(228,88,92,0))"></div><div class="a" style="left:1237px;top:442px;width:205px;height:1.7px;background:linear-gradient(90deg,rgba(228,88,92,0),rgba(228,88,92,.78) 5%,rgba(228,88,92,.78) 95%,rgba(228,88,92,0))"></div><div class="a" style="left:1237px;top:463px;width:205px;height:1.7px;background:linear-gradient(90deg,rgba(228,88,92,0),rgba(228,88,92,.78) 5%,rgba(228,88,92,.78) 95%,rgba(228,88,92,0))"></div><div class="a" style="left:1237px;top:483px;width:205px;height:1.7px;background:linear-gradient(90deg,rgba(228,88,92,0),rgba(228,88,92,.78) 5%,rgba(228,88,92,.78) 95%,rgba(228,88,92,0))"></div><div class="a" style="left:1237px;top:503px;width:205px;height:1.7px;background:linear-gradient(90deg,rgba(228,88,92,0),rgba(228,88,92,.78) 5%,rgba(228,88,92,.78) 95%,rgba(228,88,92,0))"></div><div class="a" style="left:1237px;top:505px;width:205px;height:1.7px;background:linear-gradient(90deg,rgba(228,88,92,0),rgba(228,88,92,.78) 5%,rgba(228,88,92,.78) 95%,rgba(228,88,92,0))"></div><div class="a" style="left:1237px;top:527px;width:205px;height:1.7px;background:linear-gradient(90deg,rgba(228,88,92,0),rgba(228,88,92,.78) 5%,rgba(228,88,92,.78) 95%,rgba(228,88,92,0))"></div><div class="a" style="left:1237px;top:547px;width:205px;height:1.7px;background:linear-gradient(90deg,rgba(228,88,92,0),rgba(228,88,92,.78) 5%,rgba(228,88,92,.78) 95%,rgba(228,88,92,0))"></div><div class="a" style="left:1237px;top:568px;width:205px;height:1.7px;background:linear-gradient(90deg,rgba(228,88,92,0),rgba(228,88,92,.78) 5%,rgba(228,88,92,.78) 95%,rgba(228,88,92,0))"></div><div class="a" style="left:1237px;top:570px;width:205px;height:1.7px;background:linear-gradient(90deg,rgba(228,88,92,0),rgba(228,88,92,.78) 5%,rgba(228,88,92,.78) 95%,rgba(228,88,92,0))"></div><div class="a" style="left:1237px;top:591px;width:205px;height:1.7px;background:linear-gradient(90deg,rgba(228,88,92,0),rgba(228,88,92,.78) 5%,rgba(228,88,92,.78) 95%,rgba(228,88,92,0))"></div><div class="a" style="left:1246px;top:388px;width:2px;height:212px;background:linear-gradient(rgba(240,105,110,0),rgba(240,105,110,.6) 4%,rgba(240,105,110,.6) 96%,rgba(240,105,110,0))"></div><div class="a" style="left:1432px;top:388px;width:2px;height:212px;background:linear-gradient(rgba(240,105,110,0),rgba(240,105,110,.6) 4%,rgba(240,105,110,.6) 96%,rgba(240,105,110,0))"></div>
<div class="t" style="left:1177px;top:467.5px;font-size:13px;font-weight:bold;color:#111">Punto inicial</div>
<div class="t" style="left:1177px;top:531.5px;font-size:13px;font-weight:bold;color:#111">Punto final</div>
<div class="t" style="left:1175px;top:607.2px;font-size:11.6px;color:#262626">Personalizado</div>
<div class="a" style="left:1168px;top:619px;width:274px;height:53px;border-radius:6px;background:#e3e3e3;border:1px solid #dddddd"></div>
<div class="a" style="left:1405px;top:635px;width:22px;height:22px;background:linear-gradient(#fafafa,#ececec);border:1px solid #9e9e9e"></div>
<svg style="left:1405px;top:635px" width="22" height="22"><path d="M11 6.5V15.5M6.5 11H15.5" stroke="#c80000" stroke-width="2.4"/></svg>
<svg style="left:1290px;top:507px" width="100" height="100"><circle cx="50" cy="50.5" r="37" fill="rgba(220,228,240,0.10)" stroke="rgba(130,160,195,0.42)" stroke-width="3.2"/><circle cx="50" cy="50.5" r="34.5" fill="none" stroke="rgba(160,185,210,0.3)" stroke-width="2"/><path d="M50.3 51 L50.3 72.5 L55.6 67.3 L59.6 76.8 L63.3 75.6 L59.6 66.6 L65 66 Z" fill="#fff" stroke="#000" stroke-width="1.2" stroke-linejoin="round"/></svg>
<div class="a" style="left:1454px;top:108px;width:46px;height:690px;background:linear-gradient(90deg,#f3f3f3,#e4e4e4 35%,#cacaca 94%,#b8b8b8);border-left:1px solid #c6c6c6"></div>
<div class="a" style="left:1462px;top:116px;width:2px;height:2px;background:#b0b0b0"></div>
<div class="a" style="left:1468px;top:116px;width:2px;height:2px;background:#b0b0b0"></div>
<div class="a" style="left:1474px;top:116px;width:2px;height:2px;background:#b0b0b0"></div>
<div class="a" style="left:1480px;top:116px;width:2px;height:2px;background:#b0b0b0"></div>
<div class="a" style="left:1486px;top:116px;width:2px;height:2px;background:#b0b0b0"></div>
<div class="a" style="left:1456px;top:120px;width:43px;height:43px;border-radius:6px;background:#b4b4b4"></div>
<div class="a" style="left:1456px;top:269px;width:43px;height:43px;border-radius:6px;background:#b4b4b4"></div>
<div class="a" style="left:1456px;top:418px;width:43px;height:43px;border-radius:6px;background:#b4b4b4"></div>
<div class="a" style="left:1455px;top:261px;width:45px;height:1px;background:repeating-linear-gradient(90deg,#8a8a8a 0 1px,transparent 1px 3px)"></div>
<div class="a" style="left:1455px;top:410px;width:45px;height:1px;background:repeating-linear-gradient(90deg,#8a8a8a 0 1px,transparent 1px 3px)"></div>
<svg style="left:1463px;top:127px" width="28" height="28" viewBox="0 0 28 28"><rect x="0.5" y="0.5" width="27" height="27" fill="#fff" stroke="#111" stroke-width="1"/><rect x="0" y="0" width="28" height="5" fill="#000"/><rect x="1.5" y="1.2" width="3" height="3" fill="#fff"/><path d="M8 11.5L14 9V20L8 22.5Z" fill="#888" stroke="#444" stroke-width="0.7"/><path d="M11 10.5L19 7.5V18.5L11 21.5Z" fill="#f4f4f4" stroke="#555" stroke-width="0.7"/><path d="M13 19L17 11L17.5 17Z" fill="none" stroke="#e02020" stroke-width="0.9"/></svg>
<svg style="left:1463px;top:174px" width="28" height="28" viewBox="0 0 28 28"><rect x="0.5" y="0.5" width="27" height="27" fill="#fff" stroke="#111" stroke-width="1"/><rect x="0" y="0" width="28" height="5" fill="#000"/><rect x="1.5" y="1.2" width="3" height="3" fill="#fff"/><rect x="7" y="9.5" width="10" height="8" fill="#f8ecc0" stroke="#333" stroke-width="0.8"/><circle cx="16.5" cy="17.5" r="5" fill="#f8ecc0" fill-opacity="0.85" stroke="#333" stroke-width="0.8"/></svg>
<svg style="left:1463px;top:220px" width="28" height="28" viewBox="0 0 28 28"><rect x="0.5" y="0.5" width="27" height="27" fill="#fff" stroke="#111" stroke-width="1"/><rect x="0" y="0" width="28" height="5" fill="#000"/><rect x="1.5" y="1.2" width="3" height="3" fill="#fff"/><rect x="5.5" y="9.5" width="17" height="11" rx="2.5" fill="#f4f4f4" stroke="#c0d0e8" stroke-width="1"/></svg>
<svg style="left:1463px;top:276px" width="28" height="28" viewBox="0 0 28 28"><rect x="0.5" y="0.5" width="27" height="27" fill="#fff" stroke="#111" stroke-width="1"/><rect x="0" y="0" width="28" height="5" fill="#000"/><rect x="1.5" y="1.2" width="3" height="3" fill="#fff"/><rect x="2.5" y="7.5" width="4.7" height="2.8" fill="#111"/><rect x="2.5" y="14" width="4.7" height="2.8" fill="#111"/><rect x="2.5" y="20.6" width="4.7" height="2.8" fill="#111"/><rect x="10" y="7.6" width="14.3" height="2.6" fill="#fff" stroke="#222" stroke-width="0.8"/><rect x="10" y="14.1" width="14.3" height="2.6" fill="#fff" stroke="#222" stroke-width="0.8"/><rect x="10" y="20.7" width="14.3" height="2.6" fill="#fff" stroke="#222" stroke-width="0.8"/></svg>
<svg style="left:1463px;top:323px" width="28" height="28" viewBox="0 0 28 28"><rect x="0.5" y="0.5" width="27" height="27" fill="#fff" stroke="#111" stroke-width="1"/><rect x="0" y="0" width="28" height="5" fill="#000"/><rect x="1.5" y="1.2" width="3" height="3" fill="#fff"/><path d="M7 9.5Q14 7.5 21 9.5L16 15.5V22L13 20V15.5Z" fill="#9a9a9a" stroke="#555" stroke-width="0.7"/><ellipse cx="14" cy="9.7" rx="7" ry="1.6" fill="#c8c8c8" stroke="#555" stroke-width="0.6"/></svg>
<svg style="left:1463px;top:369px" width="28" height="28" viewBox="0 0 28 28"><rect x="0.5" y="0.5" width="27" height="27" fill="#fff" stroke="#111" stroke-width="1"/><rect x="0" y="0" width="28" height="5" fill="#000"/><rect x="1.5" y="1.2" width="3" height="3" fill="#fff"/><path d="M6 9L11 12.5V18.5L6 22Z" fill="#fff" stroke="#333" stroke-width="0.8"/><rect x="11" y="12.5" width="9.5" height="6" rx="1" fill="#aaa" stroke="#666" stroke-width="0.6"/><path d="M4 15.5H24" stroke="#e04040" stroke-width="0.8" stroke-dasharray="1.5 1"/></svg>
<svg style="left:1463px;top:424px" width="28" height="28" viewBox="0 0 28 28"><rect x="0.5" y="0.5" width="27" height="27" fill="#fff" stroke="#111" stroke-width="1"/><rect x="0" y="0" width="28" height="5" fill="#000"/><rect x="1.5" y="1.2" width="3" height="3" fill="#fff"/><path d="M4 9H14M4 12H16M4 15H13M4 18H15" stroke="#888" stroke-width="0.7"/><path d="M0.5 22H27.5" stroke="#111" stroke-width="0.8"/><text x="14" y="26.5" text-anchor="middle" font-size="4.5" font-family="Liberation Sans" fill="#111">c_  command</text></svg>
<svg style="left:1463px;top:472px" width="28" height="28" viewBox="0 0 28 28"><rect x="0.5" y="0.5" width="27" height="27" fill="#fff" stroke="#111" stroke-width="1"/><rect x="0" y="0" width="28" height="5" fill="#000"/><rect x="1.5" y="1.2" width="3" height="3" fill="#fff"/><rect x="8" y="10" width="12" height="14" rx="1" fill="#c89040" stroke="#8a5a20" stroke-width="0.6"/><rect x="9.5" y="11.5" width="9" height="11" fill="#f0f0f0"/><rect x="11" y="8.5" width="6" height="3" rx="0.8" fill="#999" stroke="#666" stroke-width="0.5"/></svg>
<div class="a" style="left:0;top:798px;width:1500px;height:46px;background:#dcdcdc"></div>
<div class="t" style="left:2px;top:808px;font-size:9.6px;color:#1a1a1a">161.6,77.4</div>
<div class="t" style="left:2px;top:828px;font-size:9.6px;color:#1a1a1a">@91.6,27.4</div>
<div class="a" style="left:253px;top:802px;width:1px;height:41px;background:#9a9a9a"></div>
<div class="t" style="left:256px;top:808px;font-size:9.6px;color:#1a1a1a">179.1796&lt;26°</div>
<div class="t" style="left:256px;top:828px;font-size:9.6px;color:#1a1a1a">@95.6103&lt;17°</div>
<div class="a" style="left:506px;top:819px;width:6px;height:6px;border-radius:3px;background:#c4c4c4"></div>
<div class="a" style="left:940px;top:819px;width:6px;height:6px;border-radius:3px;background:#c4c4c4"></div>
<div class="a" style="left:1269px;top:819px;width:6px;height:6px;border-radius:3px;background:#c4c4c4"></div>
<div class="t" style="right:802px;top:812.5px;font-size:10.2px;color:#1a1a1a">Seleccionar entidad o región</div>
<div class="t" style="right:802px;top:823.5px;font-size:10.2px;color:#1a1a1a">Mover entidad o referencia</div>
<svg style="left:716px;top:805px" width="22" height="34" viewBox="0 0 22 34"><path d="M2 10Q2 2 11 2Q20 2 20 10V23Q20 32 11 32Q2 32 2 23Z" fill="#fff" stroke="#222" stroke-width="1"/><path d="M2 14H20M11 2V14" stroke="#222" stroke-width="0.8"/><rect x="9.3" y="5" width="3.4" height="6" rx="1.7" fill="#fff" stroke="#222" stroke-width="0.8"/></svg>
<div class="t" style="left:949px;top:812.5px;font-size:10.2px;color:#1a1a1a">Las entidades seleccionadas:</div>
<div class="t" style="left:949px;top:823.5px;font-size:10.2px;color:#1a1a1a">1 Línea en capa "0".</div>
</body></html>
